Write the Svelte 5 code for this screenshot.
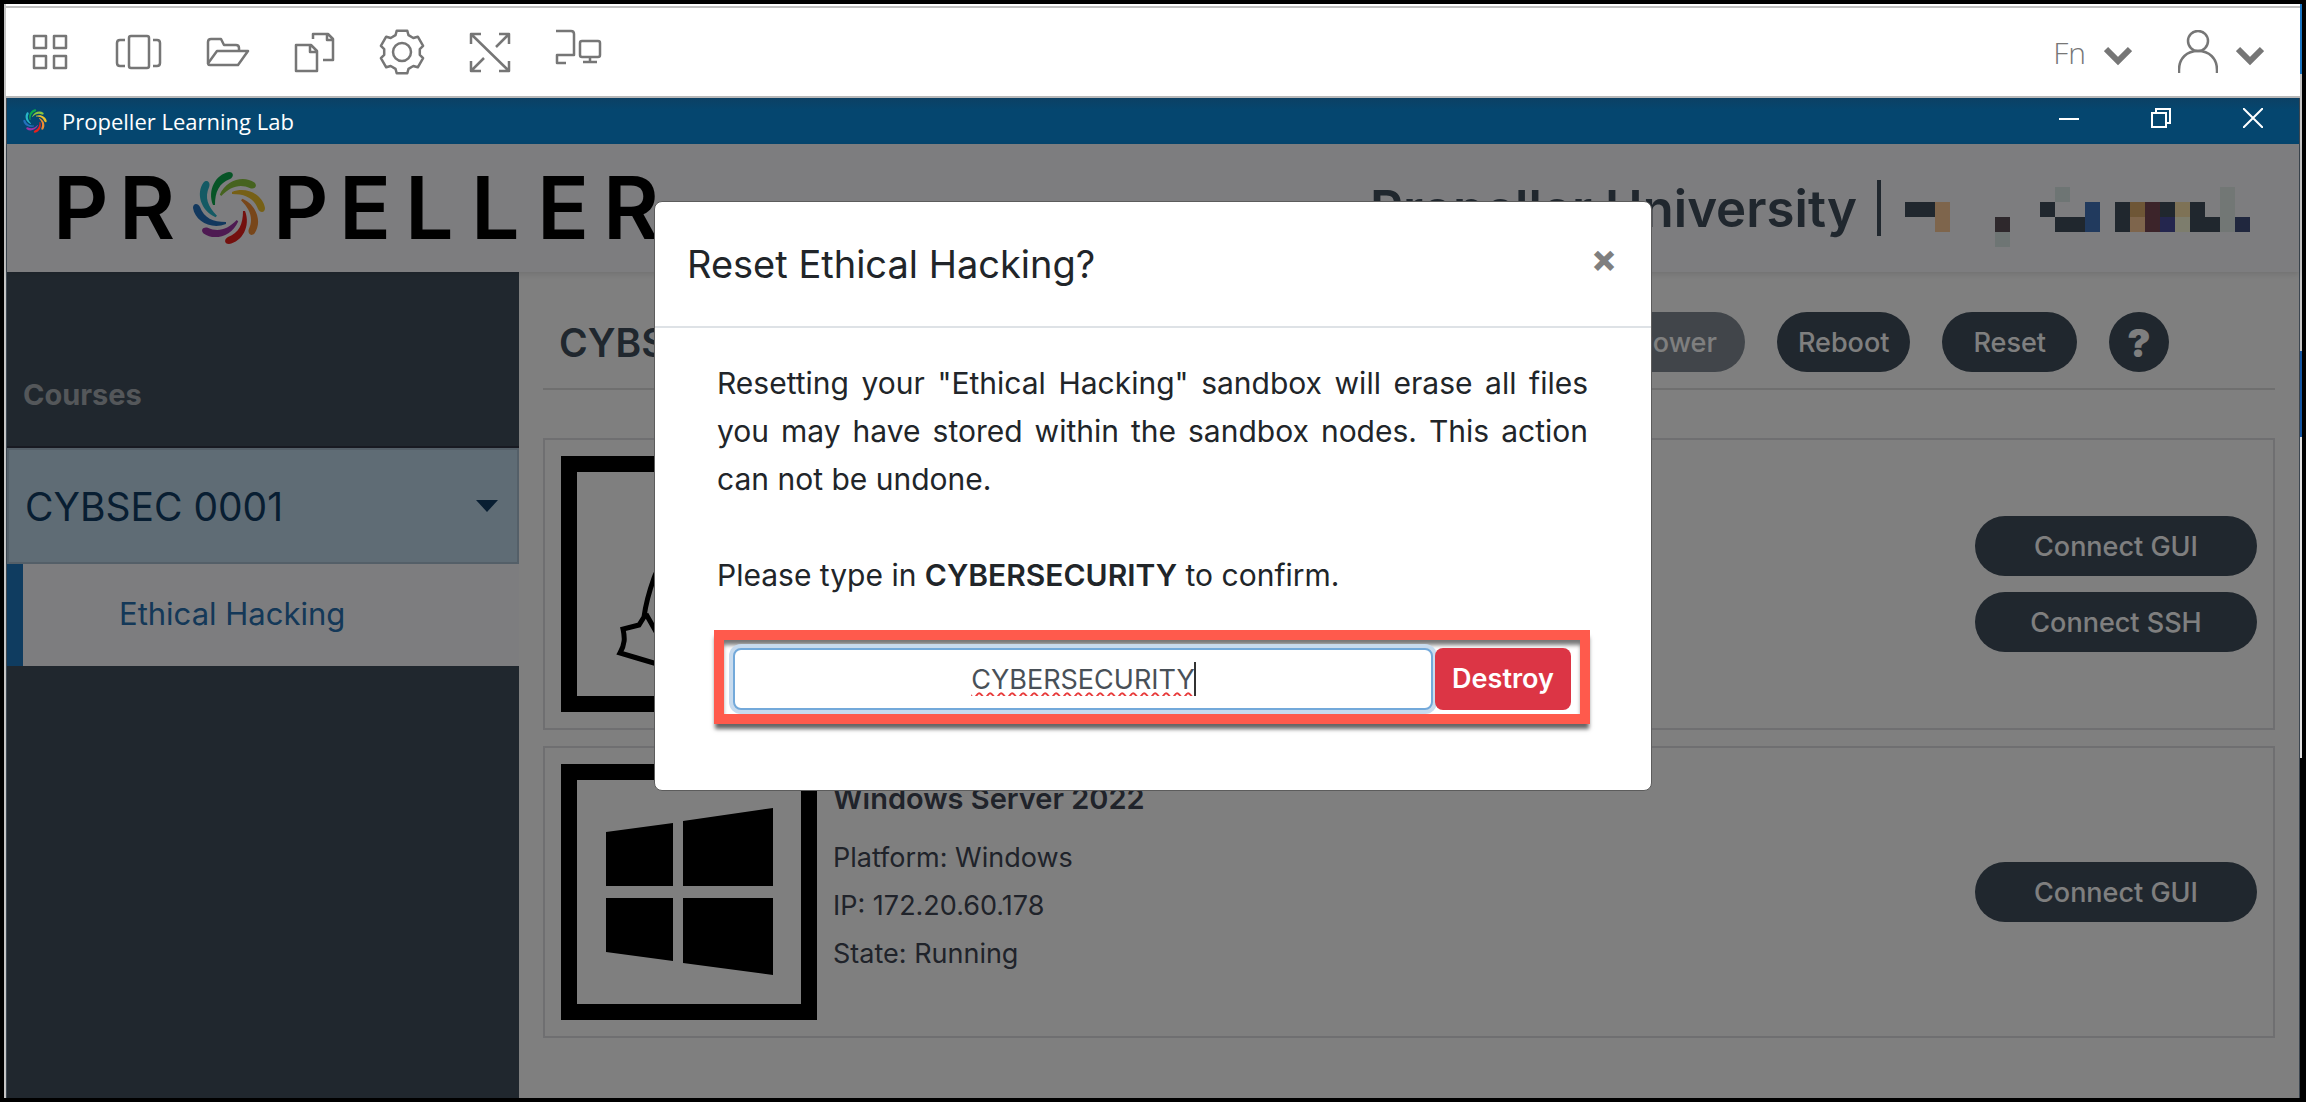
<script>
  const petals = ['#0ca84c', '#8cc63f', '#ecc02c', '#f08c34', '#e8201c', '#9c34a4', '#2470bc', '#28b4c8'];

  // gear outline with six flat teeth
  const gear = Array.from({ length: 6 }, (_, i) => i * 60 - 90)
    .flatMap((a) => [[22, a - 14], [22, a + 14], [18, a + 21], [18, a + 39]])
    .map(([r, a]) => {
      const t = (a * Math.PI) / 180;
      return `${(24 + r * Math.cos(t)).toFixed(1)},${(24 + r * Math.sin(t)).toFixed(1)}`;
    })
    .join(' ');

  // censored user name, one entry per 15px cell: [column, row, width, height, colour]
  const mosaic = [
    [0, 1, 2, 1, '#404e5c'], [2, 1, 1, 2, '#fcca98'], [6, 2, 1, 1, '#5c5058'],
    [6, 3, 1, 1, '#dceae8'], [9, 1, 1, 1, '#404e5c'], [10, 0, 1, 1, '#dceae8'],
    [10, 2, 2, 1, '#404e5c'], [12, 1, 1, 2, '#4274bc'], [14, 1, 1, 2, '#404e5c'],
    [15, 1, 1, 1, '#dcac6c'], [15, 2, 1, 1, '#fcca98'], [16, 1, 1, 2, '#784854'],
    [17, 1, 1, 1, '#404e5c'], [17, 2, 1, 1, '#484c9c'], [18, 1, 1, 1, '#fce4ac'],
    [18, 2, 1, 1, '#fafada'], [19, 1, 1, 2, '#404e5c'], [20, 2, 1, 1, '#404e5c'],
    [21, 0, 1, 3, '#e4eeea'], [22, 2, 1, 1, '#404e7c']
  ];

  const tools = ['Apps', 'Switch window', 'Files', 'Clipboard', 'Settings', 'Full screen', 'Displays'];

  const nodes = [
    { os: 'linux', actions: ['Connect GUI', 'Connect SSH'] },
    {
      os: 'windows',
      name: 'Windows Server 2022',
      info: ['Platform: Windows', 'IP: 172.20.60.178', 'State: Running'],
      actions: ['Connect GUI']
    }
  ];

  let open = true;
  let confirmText = 'CYBERSECURITY';
</script>

{#snippet swirl()}
  <svg class="swirl" viewBox="-37 -37 74 74" aria-hidden="true">
    {#each petals as color, i}
      <path
        fill={color}
        transform="rotate({i * 45})"
        d="M-16 -3 C-22 -18 -13 -34 0 -36 C5 -36 5 -31 1 -29 C-10 -25 -14 -16 -14 -3Z"
      />
    {/each}
  </svg>
{/snippet}

{#snippet chevron()}
  <svg class="chevron" viewBox="0 0 28 20" aria-hidden="true"><path d="M2 3 L14 15 L26 3" /></svg>
{/snippet}

<div class="frame">
  <div class="screen">
    <header class="toolbar">
      <nav class="tools">
        {#each tools as tool, i}
          <button type="button" aria-label={tool}>
            <svg class="icon" viewBox="0 0 48 48">
              {#if i === 0}
                <path d="M8 8H20V20H8Z M28 8H40V20H28Z M8 28H20V40H8Z M28 28H40V40H28Z" />
              {:else if i === 1}
                <rect x="15" y="8" width="20" height="32" rx="2" />
                <path d="M11 12H6Q3 12 3 15V35Q3 38 6 38H11 M39 12H43Q46 12 46 15V35Q46 38 43 38H39" />
              {:else if i === 2}
                <path d="M6 36V14Q6 11 9 11H19L22 17H34Q37 17 37 20V23" />
                <path d="M15 23H46L36 37H8Q5 37 7 34Z" />
              {:else if i === 3}
                <path d="M6 17H21L27 23V43H6Z M20 17V24H27" />
                <path d="M23 11V6H38L43 11V32H33 M37 6V12H43" />
              {:else if i === 4}
                <polygon points={gear} />
                <circle cx="24" cy="24" r="9" />
              {:else if i === 5}
                <path d="M5 6L43 43 M5 16V6H15 M43 33V43H33 M30 19L43 6 M33 6H43V16 M18 30L5 43 M5 33V43H15" />
              {:else}
                <path d="M2 3H17Q20 3 20 6V27H3V35H12" />
                <path d="M28 13H44Q46 13 46 15V27Q46 29 44 29H28Q26 29 26 27V15Q26 13 28 13Z M36 29V34 M29 34H43" />
              {/if}
            </svg>
          </button>
        {/each}
      </nav>
      <div class="account">
        <button type="button"><span>Fn</span>{@render chevron()}</button>
        <button type="button" aria-label="Account">
          <svg class="user" viewBox="0 0 40 44">
            <circle cx="20" cy="11" r="10" />
            <path d="M1 43V40C1 28 9 21 20 21S39 28 39 40V43" />
          </svg>
          {@render chevron()}
        </button>
      </div>
    </header>

    <div class="window">
      <div class="titlebar">
        <div class="caption">{@render swirl()}<span>Propeller Learning Lab</span></div>
        <div class="controls">
          <button type="button" aria-label="Minimize"><svg viewBox="0 0 20 20"><path d="M0 11H20" /></svg></button>
          <button type="button" aria-label="Restore">
            <svg viewBox="0 0 20 20"><path d="M1 5H15V19H1Z M5 5V1H19V15H15" /></svg>
          </button>
          <button type="button" aria-label="Close"><svg viewBox="0 0 20 20"><path d="M0 0L20 20 M20 0L0 20" /></svg></button>
        </div>
      </div>

      <div class="app">
        <header class="banner">
          <div class="wordmark">
            <span>P</span><span>R</span>{@render swirl()}<span>P</span><span>E</span><span>L</span><span
              >L</span
            ><span>E</span><span>R</span>
          </div>
          <div class="tenant">
            <span>Propeller University</span>
            <i class="bar"></i>
            <svg class="mosaic" viewBox="0 0 23 4" shape-rendering="crispEdges" aria-hidden="true">
              {#each mosaic as [x, y, width, height, fill]}
                <rect {x} {y} {width} {height} {fill} />
              {/each}
            </svg>
          </div>
        </header>

        <div class="columns">
          <aside class="sidebar">
            <h2>Courses</h2>
            <button type="button" class="course">
              CYBSEC 0001
              <svg viewBox="0 0 24 14" aria-hidden="true"><path d="M1 1H23L12 13Z" /></svg>
            </button>
            <a class="lab" href="#ethical-hacking">Ethical Hacking</a>
          </aside>

          <main>
            <div class="heading">
              <h1>CYBSEC 0001</h1>
              <div class="power">
                <button type="button" class="pill" disabled>Power</button>
                <button type="button" class="pill">Reboot</button>
                <button type="button" class="pill reset">Reset</button>
                <button type="button" class="pill help">?</button>
              </div>
            </div>

            {#each nodes as node}
              <section class="card">
                <div class="logo">
                  <svg viewBox="0 0 224 224" aria-hidden="true">
                    {#if node.os === 'windows'}
                      <path d="M29 52L96 43V106H29Z M106 41L196 28V106H106Z M29 118H96V181L29 172Z M106 118H196V195L106 183Z" />
                    {:else}
                      <path
                        class="line"
                        d="M112 20C92 20 90 44 92 66C94 84 82 92 77 106C72 120 69 130 67 145L62 153L46 157C48 166 48 172 43 181L60 186L80 192C92 192 92 182 86 172L69 142 M112 20C136 20 140 44 138 66C136 90 160 102 166 138L190 160V184L154 196"
                      />
                    {/if}
                  </svg>
                </div>
                <div class="details">
                  {#if node.name}
                    <h3>{node.name}</h3>
                    {#each node.info as line}
                      <p>{line}</p>
                    {/each}
                  {/if}
                </div>
                <div class="actions">
                  {#each node.actions as action}
                    <button type="button" class="pill">{action}</button>
                  {/each}
                </div>
              </section>
            {/each}
          </main>
        </div>

        {#if open}
          <div class="backdrop">
            <div class="modal" role="dialog" aria-modal="true" aria-labelledby="reset-title">
              <div class="modal-header">
                <h2 id="reset-title">Reset Ethical Hacking?</h2>
                <button type="button" class="close" aria-label="Close" on:click={() => (open = false)}>×</button>
              </div>
              <div class="modal-body">
                <p>
                  Resetting your "Ethical Hacking" sandbox will erase all files you may have stored
                  within the sandbox nodes. This action can not be undone.
                </p>
                <p><label for="confirm">Please type in <b>CYBERSECURITY</b> to confirm.</label></p>
                <form class="confirm" on:submit|preventDefault>
                  <input id="confirm" type="text" autocomplete="off" bind:value={confirmText} />
                  <button type="submit">Destroy</button>
                </form>
              </div>
            </div>
          </div>
        {/if}
      </div>
    </div>
  </div>
</div>

<style>
  :global(body) {
    margin: 0;
    background: #000;
  }

  .frame,
  .frame :global(*) {
    box-sizing: border-box;
  }

  .frame {
    display: flex;
    min-height: 100vh;
    padding: 4px;
    background: #000;
    color: #212529;
    font-family: Inter, 'Open Sans', sans-serif;
    font-size: 27px;
  }

  button {
    padding: 0;
    border: 0;
    background: none;
    color: inherit;
    font: inherit;
    cursor: pointer;
  }

  h1,
  h2,
  h3,
  p {
    margin: 0;
  }

  svg {
    display: block;
    fill: none;
  }

  .screen {
    flex: 1;
    display: flex;
    flex-direction: column;
    padding: 2px 2px 0;
    background:
      linear-gradient(#1b74c0 70px, #c4c4c4 70px 347px, #1454a0 347px 433px, #e0e0e0 433px 754px, #000 754px) right / 2px 100% no-repeat,
      linear-gradient(#c4c4c4, #c4c4c4) left / 2px 100% no-repeat,
      #fff;
  }

  .toolbar {
    display: flex;
    justify-content: space-between;
    align-items: center;
    height: 92px;
    padding: 0 36px 0 20px;
    border-top: 2px solid #c0c0c0;
    border-bottom: 2px solid #b8b8b8;
    background: #fff;
    color: #767676;
  }

  .tools {
    display: flex;
    gap: 40px;
  }

  .icon {
    width: 48px;
    height: 48px;
  }

  .icon,
  .user {
    stroke: #767676;
    stroke-width: 2.5;
    stroke-linejoin: round;
  }

  .account {
    display: flex;
    gap: 46px;
    font-family: 'Open Sans', sans-serif;
    font-size: 30px;
    font-weight: 300;
  }

  .account button {
    display: flex;
    align-items: center;
    gap: 18px;
  }

  .user {
    width: 40px;
    height: 44px;
  }

  .chevron {
    width: 28px;
    height: 20px;
    margin-top: 8px;
    stroke: #767676;
    stroke-width: 6;
  }

  .window {
    flex: 1;
    display: flex;
    flex-direction: column;
    border: 1px solid #3c4650;
    border-width: 0 1px;
  }

  .titlebar {
    display: flex;
    justify-content: space-between;
    height: 46px;
    background: linear-gradient(#0c4064, #05466f 12px);
    color: #fff;
    font-family: 'Open Sans', sans-serif;
    font-size: 22px;
  }

  .caption {
    display: flex;
    align-items: center;
    gap: 15px;
    padding-left: 16px;
  }

  .caption :global(.swirl) {
    width: 24px;
    height: 24px;
  }

  .controls {
    display: flex;
    padding-bottom: 6px;
  }

  .controls button {
    display: grid;
    place-items: center;
    width: 92px;
  }

  .controls svg {
    width: 20px;
    height: 20px;
    stroke: #fff;
    stroke-width: 2;
  }

  .app {
    position: relative;
    flex: 1;
    display: flex;
    flex-direction: column;
    background: #fff;
  }

  .banner {
    display: flex;
    justify-content: space-between;
    align-items: center;
    height: 128px;
    padding: 0 49px 0 46px;
    background: #fafafe;
    box-shadow: 0 2px 6px rgba(0, 0, 0, 0.12);
    z-index: 1;
  }

  .wordmark {
    display: flex;
    align-items: center;
    color: #000;
    font-size: 86px;
    font-weight: 600;
    line-height: 128px;
  }

  .wordmark span {
    width: 66px;
  }

  .wordmark :global(.swirl) {
    width: 74px;
    height: 74px;
    margin: 0 7px;
  }

  .tenant {
    display: flex;
    align-items: center;
    gap: 20px;
    color: #404e5c;
    font-size: 51px;
    font-weight: 600;
  }

  .bar {
    width: 4px;
    height: 56px;
    background: #404e5c;
  }

  .mosaic {
    width: 345px;
    height: 60px;
    margin: 18px 0 0 4px;
  }

  .columns {
    flex: 1;
    display: flex;
  }

  .sidebar {
    display: flex;
    flex-direction: column;
    flex: 0 0 512px;
    background: #404e5c;
  }

  .sidebar h2 {
    height: 176px;
    padding: 103px 16px 0;
    border-bottom: 2px solid #303444;
    color: #a8aeb4;
    font-size: 29px;
    font-weight: 700;
    line-height: 40px;
  }

  .course {
    display: flex;
    justify-content: space-between;
    align-items: center;
    height: 116px;
    padding: 0 18px 0 16px;
    border: 2px solid #a8bed0;
    background: #bed8ea;
    color: #103c64;
    font-size: 39px;
  }

  .course svg {
    width: 24px;
    height: 14px;
    fill: #103c64;
  }

  .lab {
    height: 102px;
    padding-left: 96px;
    border-left: 16px solid #1e78c0;
    background: #fafafe;
    color: #2870b0;
    font-size: 31px;
    line-height: 100px;
    text-decoration: none;
  }

  main {
    flex: 1;
    display: flex;
    flex-direction: column;
    gap: 16px;
    padding: 40px 24px 24px;
    color: #404654;
  }

  .heading {
    display: flex;
    justify-content: space-between;
    align-items: center;
    margin-bottom: 32px;
    padding: 0 106px 16px 16px;
    border-bottom: 2px solid #dedede;
  }

  h1 {
    color: #404e5c;
    font-size: 39px;
    font-weight: 600;
  }

  .power {
    display: flex;
    gap: 32px;
  }

  .pill {
    height: 60px;
    padding: 0 21px;
    border-radius: 30px;
    background: #404e5c;
    color: #fff;
    font-weight: 500;
  }

  .pill:disabled {
    padding: 0 28px;
    opacity: 0.65;
  }

  .pill.reset {
    padding: 0 31px;
  }

  .pill.help {
    width: 60px;
    padding: 0;
    font-size: 39px;
    font-weight: 900;
  }

  .card {
    display: flex;
    align-items: center;
    gap: 16px;
    padding: 16px;
    border: 2px solid #dfdfe3;
  }

  .logo {
    width: 256px;
    height: 256px;
    border: 16px solid #000;
  }

  .logo svg {
    fill: #000;
  }

  .logo .line {
    fill: none;
    stroke: #000;
    stroke-width: 5;
  }

  .details {
    flex: 1;
    align-self: flex-start;
    line-height: 48px;
  }

  .details h3 {
    margin: 11px 0;
    font-size: 29px;
    font-weight: 600;
  }

  .actions {
    display: flex;
    flex-direction: column;
    gap: 16px;
    width: 282px;
  }

  .backdrop {
    position: absolute;
    inset: 0;
    z-index: 2;
    display: flex;
    justify-content: center;
    align-items: flex-start;
    padding-top: 57px;
    background: rgba(0, 0, 0, 0.5);
  }

  .modal {
    width: 998px;
    border: 1px solid #5c5c5c;
    border-radius: 8px;
    background: #fff;
  }

  .modal-header {
    display: flex;
    justify-content: space-between;
    align-items: flex-start;
    height: 126px;
    padding: 32px 34px 32px 32px;
    border-bottom: 2px solid #dee2e6;
  }

  .modal-header h2 {
    font-size: 38px;
    font-weight: 400;
    line-height: 60px;
  }

  .close {
    color: #7f7f7f;
    font-size: 38px;
    font-weight: 800;
    line-height: 48px;
  }

  .modal-body {
    padding: 31px 61px 66px 59px;
    font-size: 30px;
    line-height: 48px;
  }

  .modal-body p {
    margin: 0 2px 48px 3px;
    text-align: justify;
  }

  .modal-body p + p {
    margin-bottom: 31px;
  }

  .modal-body b {
    font-weight: 600;
  }

  .confirm {
    display: flex;
    gap: 2px;
    padding: 8px 9px 4px;
    border: 10px solid #ff5a4c;
    box-shadow:
      0 6px 4px -1px #666,
      inset 0 6px 4px -1px #777;
  }

  .confirm input {
    flex: 1;
    min-width: 0;
    height: 62px;
    padding: 0;
    border: 2px solid #73a9da;
    border-radius: 8px;
    outline: none;
    box-shadow: 0 0 0 4px #c8dbee;
    background: linear-gradient(#333, #333) calc(50% + 112px) / 2px 34px no-repeat #fff;
    color: #495057;
    font: inherit;
    font-size: 27px;
    text-align: center;
    text-decoration: underline wavy #e83c3c 2px;
    text-underline-offset: 3px;
  }

  .confirm button {
    width: 136px;
    border-radius: 8px;
    background: #dc3545;
    color: #fff;
    font-size: 27px;
    font-weight: 600;
  }
</style>
